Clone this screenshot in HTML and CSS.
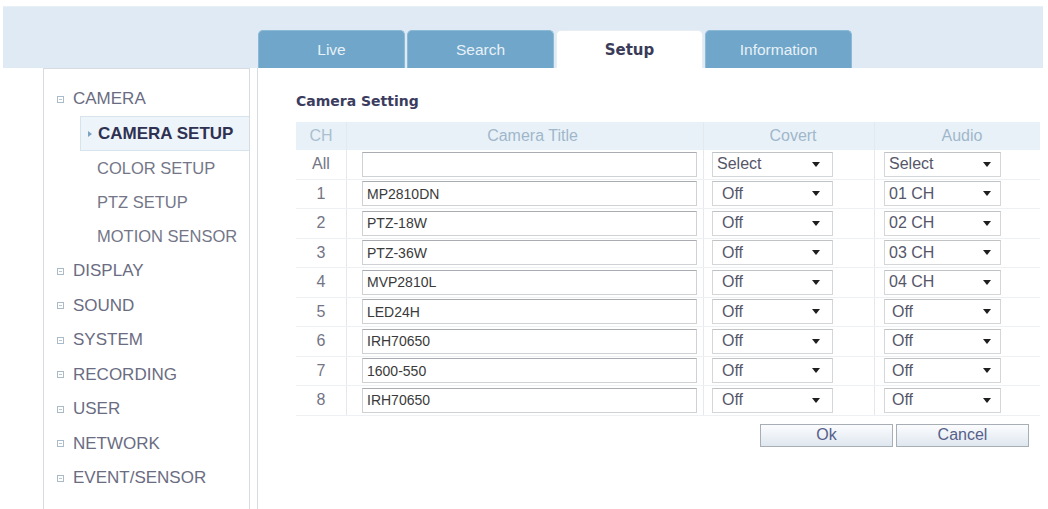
FILE: index.html
```html
<!DOCTYPE html>
<html>
<head>
<meta charset="utf-8">
<link rel="stylesheet" href="styles.css">
</head>
<body>
<div class="top">
  <div class="tab">Live</div>
  <div class="tab">Search</div>
  <div class="tab active">Setup</div>
  <div class="tab">Information</div>
</div>
<div class="body">
  <div class="sidebar">
    <div class="item"><span class="box"></span>CAMERA</div>
    <div class="sub current"><span class="arrow"></span>CAMERA SETUP</div>
    <div class="sub">COLOR SETUP</div>
    <div class="sub">PTZ SETUP</div>
    <div class="sub">MOTION SENSOR</div>
    <div class="item"><span class="box"></span>DISPLAY</div>
    <div class="item"><span class="box"></span>SOUND</div>
    <div class="item"><span class="box"></span>SYSTEM</div>
    <div class="item"><span class="box"></span>RECORDING</div>
    <div class="item"><span class="box"></span>USER</div>
    <div class="item"><span class="box"></span>NETWORK</div>
    <div class="item"><span class="box"></span>EVENT/SENSOR</div>
  </div>
  <div class="main">
    <div class="title">Camera Setting</div>
    <div class="table">
      <div class="row head">
        <div class="c ch">CH</div>
        <div class="c t">Camera Title</div>
        <div class="c cv">Covert</div>
        <div class="c au">Audio</div>
      </div>
      <div class="row">
        <div class="c ch">All</div>
        <div class="c t"><div class="input"></div></div>
        <div class="c cv"><div class="sel sel-cv"><span>Select</span><i></i></div></div>
        <div class="c au"><div class="sel sel-au"><span>Select</span><i></i></div></div>
      </div>
      <div class="row">
        <div class="c ch">1</div>
        <div class="c t"><div class="input">MP2810DN</div></div>
        <div class="c cv"><div class="sel sel-cv off"><span>Off</span><i></i></div></div>
        <div class="c au"><div class="sel sel-au"><span>01 CH</span><i></i></div></div>
      </div>
      <div class="row">
        <div class="c ch">2</div>
        <div class="c t"><div class="input">PTZ-18W</div></div>
        <div class="c cv"><div class="sel sel-cv off"><span>Off</span><i></i></div></div>
        <div class="c au"><div class="sel sel-au"><span>02 CH</span><i></i></div></div>
      </div>
      <div class="row">
        <div class="c ch">3</div>
        <div class="c t"><div class="input">PTZ-36W</div></div>
        <div class="c cv"><div class="sel sel-cv off"><span>Off</span><i></i></div></div>
        <div class="c au"><div class="sel sel-au"><span>03 CH</span><i></i></div></div>
      </div>
      <div class="row">
        <div class="c ch">4</div>
        <div class="c t"><div class="input">MVP2810L</div></div>
        <div class="c cv"><div class="sel sel-cv off"><span>Off</span><i></i></div></div>
        <div class="c au"><div class="sel sel-au"><span>04 CH</span><i></i></div></div>
      </div>
      <div class="row">
        <div class="c ch">5</div>
        <div class="c t"><div class="input">LED24H</div></div>
        <div class="c cv"><div class="sel sel-cv off"><span>Off</span><i></i></div></div>
        <div class="c au"><div class="sel sel-au off"><span>Off</span><i></i></div></div>
      </div>
      <div class="row">
        <div class="c ch">6</div>
        <div class="c t"><div class="input">IRH70650</div></div>
        <div class="c cv"><div class="sel sel-cv off"><span>Off</span><i></i></div></div>
        <div class="c au"><div class="sel sel-au off"><span>Off</span><i></i></div></div>
      </div>
      <div class="row">
        <div class="c ch">7</div>
        <div class="c t"><div class="input">1600-550</div></div>
        <div class="c cv"><div class="sel sel-cv off"><span>Off</span><i></i></div></div>
        <div class="c au"><div class="sel sel-au off"><span>Off</span><i></i></div></div>
      </div>
      <div class="row">
        <div class="c ch">8</div>
        <div class="c t"><div class="input">IRH70650</div></div>
        <div class="c cv"><div class="sel sel-cv off"><span>Off</span><i></i></div></div>
        <div class="c au"><div class="sel sel-au off"><span>Off</span><i></i></div></div>
      </div>
    </div>
    <div class="buttons">
      <div class="btn">Ok</div>
      <div class="btn">Cancel</div>
    </div>
  </div>
</div>
</body>
</html>
```
FILE: styles.css
```css
* { box-sizing: border-box; }
html, body { margin: 0; padding: 0; background: #fff; overflow: hidden; }
body {
  font-family: "Liberation Sans", Arial, sans-serif;
  width: 1048px;
  height: 509px;
}
.top {
  margin: 6px 5px 0 3px;
  height: 62px;
  background: #dfeaf4;
  border-top: 1px solid #e8f0f7;
  display: flex;
  align-items: flex-end;
  padding-left: 255px;
  gap: 2px;
}
.tab {
  width: 147px;
  height: 38px;
  background: #6fa6c9;
  border: 1px solid #8bb9d6;
  border-bottom: none;
  border-radius: 5px 5px 0 0;
  color: #e8f1f8;
  font-size: 15.5px;
  display: flex;
  align-items: center;
  justify-content: center;
}
.tab.active {
  background: #fff;
  border-color: #e6edf3;
  color: #3a3b58;
  font-family: "DejaVu Sans", Verdana, sans-serif;
  font-weight: bold;
  font-size: 15px;
}
.body {
  display: flex;
  height: 441px;
}
.sidebar {
  margin-left: 43px;
  width: 207px;
  border: 1px solid #d6dce2;
  border-bottom: none;
  padding-top: 13px;
}
.item, .sub {
  height: 34.45px;
  display: flex;
  align-items: center;
  font-size: 17px;
  color: #6a6c82;
}
.item { padding-left: 13px; }
.box {
  width: 7px;
  height: 7px;
  border: 1px solid #a9bac8;
  margin-right: 9px;
  position: relative;
}
.box::after {
  content: "";
  position: absolute;
  left: 1px;
  top: 2px;
  width: 3px;
  height: 1px;
  background: #b8c6d2;
}
.sub {
  margin-left: 36px;
  padding-left: 17px;
  color: #747688;
  font-size: 16.5px;
}
.sub.current {
  background: #eef5fa;
  border: 1px solid #d7e4ee;
  border-right: none;
  font-weight: bold;
  font-size: 17px;
  color: #2f3152;
  padding-left: 7px;
}
.arrow {
  width: 0;
  height: 0;
  border-left: 4px solid #7ea3c2;
  border-top: 3.5px solid transparent;
  border-bottom: 3.5px solid transparent;
  margin-right: 6px;
}
.main {
  margin-left: 7px;
  flex: 1;
  border-left: 1px solid #d6dce2;
  padding: 25px 0 0 38px;
}
.title {
  font-family: "DejaVu Sans", Verdana, sans-serif;
  font-weight: bold;
  font-size: 14px;
  line-height: 17px;
  color: #3b3c5e;
  margin-bottom: 12px;
}
.table { width: 744px; }
.row {
  display: grid;
  grid-template-columns: 50px 357px 171px 166px;
  height: 29.5px;
  border-bottom: 1px solid #eef1f4;
}
.row.head {
  height: 28px;
  background: #e9f1f8;
  border-bottom: none;
  color: #9fb7cb;
  font-size: 16px;
}
.c {
  display: flex;
  align-items: center;
}
.c + .c { border-left: 1px solid #e4e9ee; }
.ch {
  justify-content: center;
  font-size: 16px;
  color: #737485;
}
.head .ch { color: #a9bfd0; }
.head .t, .head .cv, .head .au { justify-content: center; }
.t { padding-left: 15px; }
.cv { padding-left: 8px; }
.au { padding-left: 9px; }
.input {
  width: 335px;
  height: 25px;
  border: 1px solid #cfd2d5;
  border-top-color: #a9acb0;
  padding-left: 4px;
  display: flex;
  align-items: center;
  font-size: 14px;
  color: #3a3a3a;
  background: #fff;
}
.sel {
  height: 25px;
  border: 1px solid #d4d7da;
  border-top-color: #c0c3c6;
  display: flex;
  align-items: center;
  justify-content: space-between;
  font-size: 16px;
  color: #55566a;
  padding-left: 4px;
  background: #fff;
}
.sel.off { padding-left: 9px; }
.sel-au.off { padding-left: 7px; }
.sel-cv { width: 121px; padding-right: 12px; }
.sel-au { width: 117px; padding-right: 9px; }
.sel i {
  width: 0;
  height: 0;
  border-top: 5px solid #1e1e1e;
  border-left: 4px solid transparent;
  border-right: 4px solid transparent;
}
.buttons {
  width: 744px;
  display: flex;
  justify-content: flex-end;
  gap: 3px;
  padding-right: 11px;
  margin-top: 8px;
}
.btn {
  width: 133px;
  height: 23px;
  border: 1px solid #a7aeb6;
  background: linear-gradient(#fbfcfe, #dfe7ef);
  color: #56608a;
  font-size: 16px;
  display: flex;
  align-items: center;
  justify-content: center;
}
```
